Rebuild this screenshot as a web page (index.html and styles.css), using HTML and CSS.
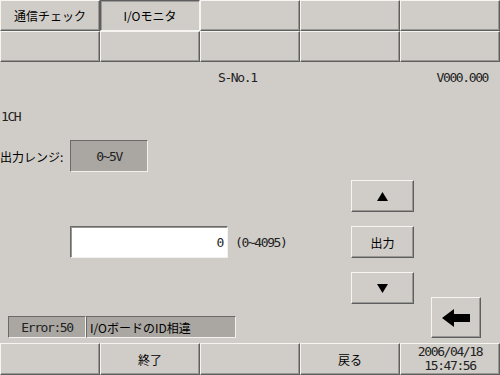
FILE: index.html
```html
<!DOCTYPE html>
<html lang="ja">
<head>
  <meta charset="UTF-8" />
  <title>I/Oモニタ</title>
  <link rel="stylesheet" href="styles.css">
</head>
<body>
  <div class="screen">
    <!-- 上部メニュー -->
    <div class="menu">
      <button class="btn">通信チェック</button>
      <button class="btn pressed">I/Oモニタ</button>
      <button class="btn"></button>
      <button class="btn"></button>
      <button class="btn"></button>
      <button class="btn"></button>
      <button class="btn"></button>
      <button class="btn"></button>
      <button class="btn"></button>
      <button class="btn"></button>
    </div>

    <div class="info">
      <span class="mono sno">S-No.1</span>
      <span class="mono ver">V000.000</span>
    </div>

    <div class="body">
      <div class="left">
        <div class="ch mono">1CH</div>
        <div class="range">
          <span class="label">出力レンジ:</span>
          <span class="sunken range-box mono">0~5V</span>
        </div>
        <div class="value-row">
          <span class="entry mono">0</span>
          <span class="mono hint">(0~4095)</span>
        </div>
        <div class="error">
          <span class="sunken err-code mono">Error:50</span>
          <span class="sunken err-msg">I/OボードのID相違</span>
        </div>
      </div>

      <div class="mid">
        <button class="btn small">
          <svg width="11" height="9" viewBox="0 0 11 9"><polygon points="5.5,0 11,9 0,9" fill="#000"/></svg>
        </button>
        <button class="btn small">出力</button>
        <button class="btn small">
          <svg width="11" height="9" viewBox="0 0 11 9"><polygon points="0,0 11,0 5.5,9" fill="#000"/></svg>
        </button>
      </div>

      <div class="right">
        <button class="btn back">
          <svg width="28" height="18" viewBox="0 0 28 18"><polygon points="0,9 12,0 12,5 28,5 28,13 12,13 12,18" fill="#000"/></svg>
        </button>
      </div>
    </div>

    <!-- 下部メニュー -->
    <div class="footer">
      <button class="btn"></button>
      <button class="btn">終了</button>
      <button class="btn"></button>
      <button class="btn">戻る</button>
      <button class="btn date"><span class="mono">2006/04/18</span><span class="mono">15:47:56</span></button>
    </div>
  </div>
</body>
</html>
```

FILE: styles.css
```css
body {
  margin: 0;
  background: #d0cdc8;
  font-family: "Noto Sans CJK JP", "DejaVu Sans", sans-serif;
  font-size: 12px;
  color: #000;
}

.screen {
  width: 500px;
  height: 375px;
  display: flex;
  flex-direction: column;
  overflow: hidden;
}

.mono {
  font-family: "DejaVu Sans Mono", monospace;
  font-size: 13px;
  letter-spacing: -1.4px;
  color: #222;
}

/* ボタン共通 */
.btn {
  box-sizing: border-box;
  margin: 0;
  padding: 0;
  background: #d0cdc8;
  border: 1px solid;
  border-color: #f6f5f2 #5e5e5e #5e5e5e #f6f5f2;
  box-shadow: inset -1px -1px 0 #9a9894;
  font-family: inherit;
  font-size: 12px;
  color: #000;
  display: flex;
  align-items: center;
  justify-content: center;
}

.btn.pressed {
  border-color: #5e5e5e #f6f5f2 #f6f5f2 #5e5e5e;
  box-shadow: inset 1px 1px 0 #9a9894;
}

.menu {
  display: grid;
  grid-template-columns: repeat(5, 100px);
  grid-template-rows: 31px 31px;
}

.info {
  height: 30px;
  display: flex;
  align-items: center;
}

.sno {
  margin-left: 218px;
}

.ver {
  margin-left: auto;
  margin-right: 12px;
}

.body {
  flex: 1;
  display: flex;
}

.left {
  width: 351px;
  display: flex;
  flex-direction: column;
}

.ch {
  height: 48px;
  line-height: 50px;
  padding-left: 1px;
}

.range {
  height: 32px;
  display: flex;
  align-items: center;
}

.label {
  width: 70px;
}

.sunken {
  box-sizing: border-box;
  background: #aaa7a2;
  border: 1px solid;
  border-color: #6a6a6a #f2f1ee #f2f1ee #6a6a6a;
  display: flex;
  align-items: center;
}

.range-box {
  width: 78px;
  height: 32px;
  justify-content: center;
}

.value-row {
  margin-top: 54px;
  height: 32px;
  display: flex;
  align-items: center;
}

.entry {
  box-sizing: border-box;
  margin-left: 70px;
  width: 158px;
  height: 32px;
  background: #fff;
  border: 1px solid;
  border-color: #6a6a6a #f2f1ee #f2f1ee #6a6a6a;
  box-shadow: inset 1px 1px 0 #9a9894;
  display: flex;
  align-items: center;
  justify-content: flex-end;
  padding-right: 4px;
}

.hint {
  margin-left: 7px;
}

.error {
  margin-top: auto;
  margin-bottom: 5px;
  margin-left: 8px;
  height: 22px;
  display: flex;
}

.err-code {
  width: 78px;
  justify-content: center;
}

.err-msg {
  width: 150px;
  padding-left: 3px;
}

.mid {
  width: 63px;
  display: flex;
  flex-direction: column;
  padding-top: 88px;
  gap: 14px;
}

.btn.small {
  width: 63px;
  height: 32px;
}

.right {
  margin-left: 17px;
  display: flex;
  flex-direction: column;
  justify-content: flex-end;
  padding-bottom: 5px;
}

.btn.back {
  width: 50px;
  height: 41px;
}

.footer {
  display: grid;
  grid-template-columns: repeat(5, 100px);
  height: 32px;
}

.btn.date {
  flex-direction: column;
}

.btn.date .mono {
  display: block;
  line-height: 14px;
}
```
